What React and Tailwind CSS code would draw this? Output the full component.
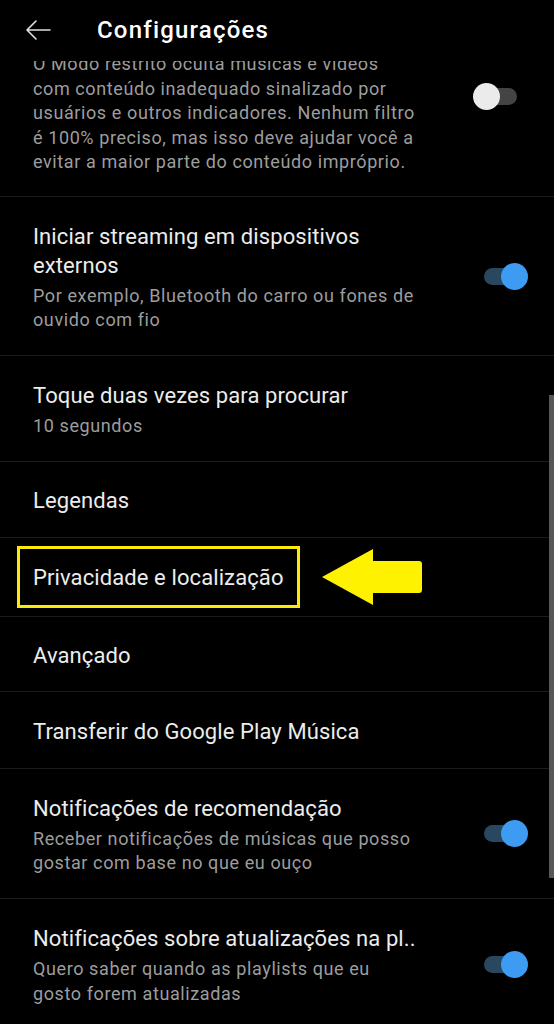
import React from "react";

function Toggle({ on, className = "" }) {
  return (
    <div className={`relative w-[44px] h-[27px] shrink-0 ${className}`}>
      <div
        className={`absolute top-[5px] h-[17px] w-[40px] rounded-full ${
          on ? "right-[4px] bg-[#2a4760]" : "left-[4px] bg-[#444444]"
        }`}
      />
      <div
        className={`absolute top-0 h-[27px] w-[27px] rounded-full ${
          on ? "right-0 bg-[#3d9cf2]" : "left-0 bg-[#ebebeb]"
        }`}
      />
    </div>
  );
}

const titleCls = "text-[22px] leading-[29px] tracking-[0.1px] text-[#ececec]";
const subCls = "text-[18px] leading-[24.5px] tracking-[0.6px] text-[#9d9d9d]";

function Row({ title, subtitle, toggle, h }) {
  return (
    <div
      className={`flex items-center justify-between border-b border-[#1c1c1c] pl-[33px] pr-[26px] ${h}`}
    >
      <div className="flex flex-col pt-[2px]">
        <p className={titleCls}>{title}</p>
        {subtitle && <p className={`mt-[4px] ${subCls}`}>{subtitle}</p>}
      </div>
      {toggle !== undefined && <Toggle on={toggle} />}
    </div>
  );
}

export default function App() {
  return (
    <div
      className="relative h-[1024px] w-[554px] overflow-hidden bg-black"
      style={{ fontFamily: "Roboto, 'Noto Sans', sans-serif" }}
    >
      <div className="flex h-[61px] items-center pb-[1px]">
        <svg
          className="ml-[25px] h-[26px] w-[28px]"
          viewBox="0 0 28 26"
          fill="none"
          stroke="#e0e0e0"
          strokeWidth="1.6"
          strokeLinecap="round"
        >
          <path d="M2 13 H25 M2 13 L11 4 M2 13 L11 22" />
        </svg>
        <h1 className="ml-[44px] text-[24px] font-medium tracking-[1.2px] text-white">
          Configurações
        </h1>
      </div>

      <div className="h-[963px] overflow-hidden">
        <div className="-mt-[9px] flex h-[145px] justify-between border-b border-[#1c1c1c] pl-[33px] pr-[37px]">
          <p className={subCls}>
            O Modo restrito oculta músicas e vídeos
            <br />
            com conteúdo inadequado sinalizado por
            <br />
            usuários e outros indicadores. Nenhum filtro
            <br />
            é 100% preciso, mas isso deve ajudar você a
            <br />
            evitar a maior parte do conteúdo impróprio.
          </p>
          <Toggle on={false} className="mt-[31px]" />
        </div>

        <Row
          h="h-[159px]"
          title={
            <>
              Iniciar streaming em dispositivos
              <br />
              externos
            </>
          }
          subtitle={
            <>
              Por exemplo, Bluetooth do carro ou fones de
              <br />
              ouvido com fio
            </>
          }
          toggle={true}
        />
        <Row h="h-[106px]" title="Toque duas vezes para procurar" subtitle="10 segundos" />
        <Row h="h-[76px]" title="Legendas" />
        <div className="flex h-[79px] items-center border-b border-[#1c1c1c] pl-[17px]">
          <div className="flex h-[62px] w-[283px] items-center border-[3px] border-[#fbe90a] pl-[13px]">
            <p className={titleCls}>Privacidade e localização</p>
          </div>
          <svg className="ml-[22px] h-[56px] w-[101px]" viewBox="0 0 101 56">
            <path
              d="M0 28 L51 0 L51 12 L97 12 Q100 12 100 15 L100 41 Q100 44 97 44 L51 44 L51 56 Z"
              fill="#fff200"
            />
          </svg>
        </div>
        <Row h="h-[75px]" title="Avançado" />
        <Row h="h-[77px]" title="Transferir do Google Play Música" />
        <Row
          h="h-[130px]"
          title="Notificações de recomendação"
          subtitle={
            <>
              Receber notificações de músicas que posso
              <br />
              gostar com base no que eu ouço
            </>
          }
          toggle={true}
        />
        <Row
          h="h-[131px]"
          title="Notificações sobre atualizações na pl.."
          subtitle={
            <>
              Quero saber quando as playlists que eu
              <br />
              gosto forem atualizadas
            </>
          }
          toggle={true}
        />
      </div>

      <div className="absolute right-0 top-[395px] h-[483px] w-[5px] bg-[#575757]" />
    </div>
  );
}
